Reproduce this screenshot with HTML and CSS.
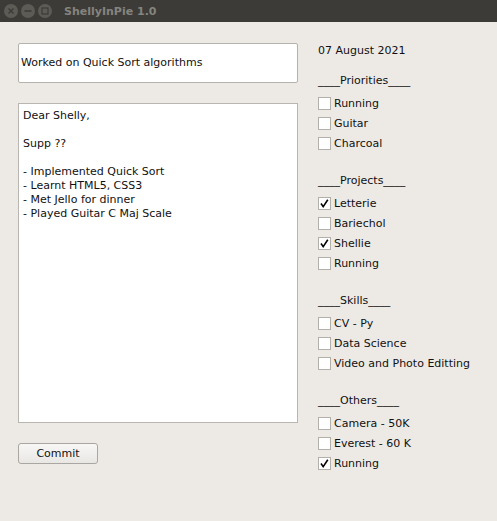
FILE: index.html
```html
<!DOCTYPE html>
<html>
<head>
<meta charset="utf-8">
<title>ShellyInPie 1.0</title>
<link rel="stylesheet" href="styles.css">
</head>
<body>
<div class="titlebar">
  <div class="wbtns">
    <span class="wbtn"><svg width="14" height="14" viewBox="0 0 14 14"><path d="M4.5 4.5L9.5 9.5M9.5 4.5L4.5 9.5" stroke="#3c3b37" stroke-width="1.4"/></svg></span>
    <span class="wbtn"><svg width="14" height="14" viewBox="0 0 14 14"><path d="M3.5 7H10.5" stroke="#3c3b37" stroke-width="1.6"/></svg></span>
    <span class="wbtn"><svg width="14" height="14" viewBox="0 0 14 14"><rect x="4" y="4" width="6" height="6" fill="none" stroke="#3c3b37" stroke-width="1.2"/></svg></span>
  </div>
  <span class="wtitle">ShellyInPie 1.0</span>
</div>
<div class="main">
  <div class="left">
    <div class="entry">Worked on Quick Sort algorithms</div>
    <div class="textarea">Dear Shelly,

Supp ??

- Implemented Quick Sort
- Learnt HTML5, CSS3
- Met Jello for dinner
- Played Guitar C Maj Scale</div>
    <div class="btnrow"><button class="commit">Commit</button></div>
  </div>
  <div class="right">
    <div class="date">07 August 2021</div>
    <div class="group">
      <div class="ghead">____Priorities____</div>
      <div class="cb"><span class="box"></span>Running</div>
      <div class="cb"><span class="box"></span>Guitar</div>
      <div class="cb"><span class="box"></span>Charcoal</div>
    </div>
    <div class="group">
      <div class="ghead">____Projects____</div>
      <div class="cb"><span class="box"><svg width="11" height="11" viewBox="0 0 11 11"><path d="M2 5.5L4.2 8.6L8.8 1.8" fill="none" stroke="#000" stroke-width="1.6"/></svg></span>Letterie</div>
      <div class="cb"><span class="box"></span>Bariechol</div>
      <div class="cb"><span class="box"><svg width="11" height="11" viewBox="0 0 11 11"><path d="M2 5.5L4.2 8.6L8.8 1.8" fill="none" stroke="#000" stroke-width="1.6"/></svg></span>Shellie</div>
      <div class="cb"><span class="box"></span>Running</div>
    </div>
    <div class="group">
      <div class="ghead">____Skills____</div>
      <div class="cb"><span class="box"></span>CV - Py</div>
      <div class="cb"><span class="box"></span>Data Science</div>
      <div class="cb"><span class="box"></span>Video and Photo Editting</div>
    </div>
    <div class="group">
      <div class="ghead">____Others____</div>
      <div class="cb"><span class="box"></span>Camera - 50K</div>
      <div class="cb"><span class="box"></span>Everest - 60 K</div>
      <div class="cb"><span class="box"><svg width="11" height="11" viewBox="0 0 11 11"><path d="M2 5.5L4.2 8.6L8.8 1.8" fill="none" stroke="#000" stroke-width="1.6"/></svg></span>Running</div>
    </div>
  </div>
</div>
</body>
</html>
```

FILE: styles.css
```css
html, body {
  margin: 0;
  padding: 0;
}
body {
  background: #edeae6;
  font-family: "DejaVu Sans", sans-serif;
  font-size: 11px;
  color: #111;
  width: 497px;
  height: 521px;
  overflow: hidden;
}
.titlebar {
  height: 22px;
  background: #3c3b37;
  display: flex;
  align-items: center;
}
.wbtns {
  display: flex;
  gap: 3px;
  padding-left: 4px;
}
.wbtn {
  width: 14px;
  height: 14px;
  border-radius: 50%;
  background: #5c5b56;
  display: flex;
}
.wtitle {
  margin-left: 12px;
  font-family: "DejaVu Sans", sans-serif;
  font-weight: bold;
  font-size: 11px;
  color: #85847f;
}
.main {
  display: flex;
  padding-left: 18px;
}
.left {
  width: 280px;
  padding-top: 21px;
  display: flex;
  flex-direction: column;
}
.entry {
  height: 38px;
  background: #fff;
  border: 1px solid #b6b3ae;
  border-radius: 2px;
  line-height: 38px;
  padding-left: 2px;
  white-space: nowrap;
}
.textarea {
  margin-top: 20px;
  height: 309px;
  background: #fff;
  border: 1px solid #b9b6b1;
  padding: 5px 4px 4px 4px;
  line-height: 14px;
  white-space: pre;
}
.btnrow {
  margin-top: 20px;
}
.commit {
  width: 80px;
  height: 21px;
  font-family: "DejaVu Sans", sans-serif;
  font-size: 11px;
  color: #111;
  border: 1px solid #aaa7a2;
  border-radius: 3px;
  background: linear-gradient(#f8f7f6, #e9e7e4);
  padding: 0;
  margin: 0;
}
.right {
  margin-left: 20px;
  padding-top: 19px;
  display: flex;
  flex-direction: column;
  gap: 18px;
}
.date {
  height: 20px;
  line-height: 20px;
  margin-bottom: -8px;
}
.ghead {
  height: 20px;
  line-height: 20px;
  margin-bottom: 2px;
}
.cb {
  height: 20px;
  display: flex;
  align-items: center;
  white-space: nowrap;
}
.box {
  width: 11px;
  height: 11px;
  border: 1px solid #b3b0ab;
  background: #fff;
  margin-right: 3px;
  display: flex;
}
```
